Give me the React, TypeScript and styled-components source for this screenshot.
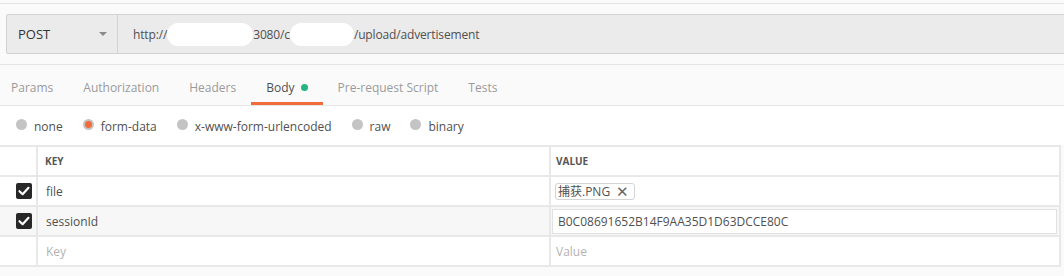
import styled, { createGlobalStyle } from "styled-components";

const GlobalStyle = createGlobalStyle`
  html, body {
    margin: 0;
    padding: 0;
    background: #fafafa;
    overflow: hidden;
  }
  body {
    font-family: "Open Sans", "Noto Sans CJK SC", sans-serif;
    color: #505050;
  }
`;

const Page = styled.div`
  width: 1064px;
  height: 276px;
  overflow: hidden;
  background: #fafafa;
`;

const Header = styled.div`
  margin-top: 3px;
  border-top: 1px solid #e4e4e4;
  border-bottom: 1px solid #e4e4e4;
  padding: 10px 0 10px 6px;
`;

const UrlBar = styled.div`
  display: flex;
  height: 38px;
  margin-right: -6px;
  border: 1px solid #d2d2d2;
  border-radius: 2px;
  background: #ebebeb;
`;

const Method = styled.div`
  display: flex;
  align-items: center;
  justify-content: space-between;
  width: 111px;
  box-sizing: border-box;
  padding: 0 10px 0 11px;
  border-right: 1px solid #d2d2d2;
  font-size: 13px;
  color: #333;
`;

const Caret = styled.span`
  width: 0;
  height: 0;
  border-left: 4px solid transparent;
  border-right: 4px solid transparent;
  border-top: 4px solid #8a8a8a;
`;

const Url = styled.div`
  display: flex;
  align-items: center;
  padding-left: 15px;
  font-size: 12px;
  letter-spacing: -0.15px;
  color: #505050;
`;

const Blob = styled.span<{ $w: number }>`
  display: inline-block;
  width: ${(p) => p.$w}px;
  height: 23px;
  border-radius: 12px;
  background: #ffffff;
`;

const TabBar = styled.div`
  display: flex;
  margin-left: -4px;
  border-bottom: 1px solid #e6e6e6;
`;

const Tab = styled.div<{ $active?: boolean }>`
  display: flex;
  align-items: center;
  gap: 6px;
  height: 40px;
  box-sizing: border-box;
  padding: 7px 15px 0 15px;
  font-size: 12px;
  color: ${(p) => (p.$active ? "#505050" : "#9a9a9a")};
  border-bottom: 3px solid ${(p) => (p.$active ? "#f26b3a" : "transparent")};
`;

const Dot = styled.span`
  width: 7px;
  height: 7px;
  border-radius: 50%;
  background: #26b47f;
`;

const RadioRow = styled.div`
  display: flex;
  align-items: center;
  height: 39px;
  box-sizing: border-box;
  padding: 2px 0 0 16px;
  background: #ffffff;
`;

const RadioOption = styled.label`
  display: flex;
  align-items: center;
  gap: 7px;
  margin-right: 20px;
  font-size: 12px;
  color: #505050;
`;

const RadioDot = styled.span<{ $checked?: boolean }>`
  width: 11px;
  height: 11px;
  border-radius: 50%;
  background: ${(p) => (p.$checked ? "#f26b3a" : "#c4c4c4")};
  box-sizing: border-box;
  border: ${(p) => (p.$checked ? "2px solid #c4c4c4" : "none")};
  margin-top: -4px;
`;

const Table = styled.div`
  border-top: 2px solid #e8e8e8;
  width: 1061px;
`;

const Row = styled.div<{ $shade?: boolean }>`
  display: grid;
  grid-template-columns: 38px 513px 510px;
  height: 30px;
  box-sizing: border-box;
  border-bottom: 2px solid #e8e8e8;
  background: ${(p) => (p.$shade ? "#f7f7f7" : "#ffffff")};
`;

const Cell = styled.div<{ $pad?: number }>`
  display: flex;
  align-items: center;
  box-sizing: border-box;
  border-right: 2px solid #e8e8e8;
  padding-left: ${(p) => p.$pad ?? 8}px;
  font-size: 12px;
  color: #505050;
  overflow: hidden;
`;

const CheckCell = styled(Cell)`
  padding-left: 16px;
`;

const HeadLabel = styled.span`
  font-size: 10px;
  font-weight: 700;
  color: #555;
`;

const Placeholder = styled.span`
  color: #b3b3b3;
`;

const Chip = styled.span`
  display: inline-flex;
  align-items: center;
  gap: 6px;
  height: 17px;
  box-sizing: border-box;
  padding: 0 5px 0 2px;
  border: 1px solid #d4d4d4;
  border-radius: 3px;
  background: #fff;
  font-size: 12px;
  color: #505050;
`;

const Close = styled.span`
  font-size: 15px;
  line-height: 1;
  color: #666;
`;

const ValueInput = styled.div`
  display: flex;
  align-items: center;
  width: 505px;
  height: 25px;
  box-sizing: border-box;
  padding-left: 5px;
  border: 1px solid #e1e1e1;
  background: #fff;
  font-size: 12px;
  color: #505050;
`;

const Checkbox = () => (
  <svg width="16" height="16" viewBox="0 0 16 16">
    <rect x="0" y="0" width="16" height="16" rx="2" fill="#282828" />
    <path d="M3.5 8.2 L6.6 11.2 L12.5 4.8" stroke="#fff" strokeWidth="2.2" fill="none" strokeLinecap="round" strokeLinejoin="round" />
  </svg>
);

const tabs = ["Params", "Authorization", "Headers", "Body", "Pre-request Script", "Tests"];
const modes = ["none", "form-data", "x-www-form-urlencoded", "raw", "binary"];

export default function App() {
  return (
    <Page>
      <GlobalStyle />
      <Header>
        <UrlBar>
          <Method>
            POST
            <Caret />
          </Method>
          <Url>
            http://<Blob $w={86} />3080/c<Blob $w={64} />/upload/advertisement
          </Url>
        </UrlBar>
      </Header>
      <TabBar>
        {tabs.map((t) => (
          <Tab key={t} $active={t === "Body"}>
            {t}
            {t === "Body" && <Dot />}
          </Tab>
        ))}
      </TabBar>
      <RadioRow>
        {modes.map((m) => (
          <RadioOption key={m}>
            <RadioDot $checked={m === "form-data"} />
            {m}
          </RadioOption>
        ))}
      </RadioRow>
      <Table>
        <Row>
          <Cell />
          <Cell $pad={7}>
            <HeadLabel>KEY</HeadLabel>
          </Cell>
          <Cell $pad={5}>
            <HeadLabel>VALUE</HeadLabel>
          </Cell>
        </Row>
        <Row>
          <CheckCell>
            <Checkbox />
          </CheckCell>
          <Cell>file</Cell>
          <Cell $pad={4}>
            <Chip>
              捕获.PNG
              <Close>✕</Close>
            </Chip>
          </Cell>
        </Row>
        <Row $shade>
          <CheckCell>
            <Checkbox />
          </CheckCell>
          <Cell>sessionId</Cell>
          <Cell $pad={1}>
            <ValueInput>B0C08691652B14F9AA35D1D63DCCE80C</ValueInput>
          </Cell>
        </Row>
        <Row>
          <CheckCell />
          <Cell>
            <Placeholder>Key</Placeholder>
          </Cell>
          <Cell $pad={5}>
            <Placeholder>Value</Placeholder>
          </Cell>
        </Row>
      </Table>
    </Page>
  );
}
